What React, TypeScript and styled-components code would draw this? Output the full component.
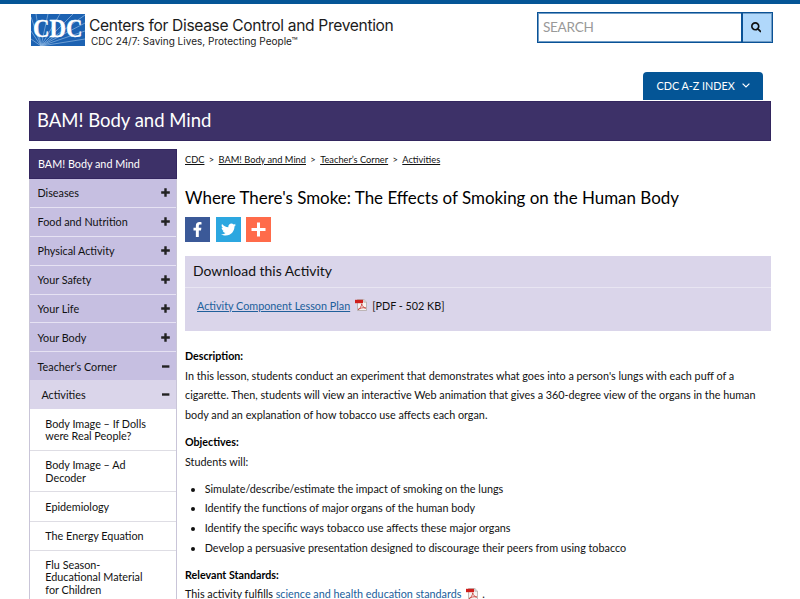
import React from 'react';
import styled, { createGlobalStyle } from 'styled-components';
import { FaFacebookF, FaSearch, FaTwitter } from 'react-icons/fa';

const GlobalStyle = createGlobalStyle`
  * { box-sizing: border-box; }
  html, body { margin: 0; padding: 0; background: #fff; }
  body {
    height: 599px;
    overflow: hidden;
    font-family: Lato, sans-serif;
    font-size: 10.8px;
    color: #111;
  }
`;

const Page = styled.div`
  width: 800px;
  height: 599px;
  overflow: hidden;
  border-top: 4px solid #045596;
`;

const Header = styled.header`
  display: flex;
  justify-content: space-between;
  height: 68px;
  padding: 8px 27px 0 31px;
`;

const Brand = styled.a`
  display: flex;
  gap: 4px;
  padding-top: 2px;
`;

const BrandText = styled.div`
  display: flex;
  flex-direction: column;
  font-family: Inter, sans-serif;
  color: #1c1c1c;
  white-space: nowrap;
`;

const BrandName = styled.span`
  margin-top: 2px;
  font-size: 15.6px;
  line-height: 20px;
  letter-spacing: -0.34px;
`;

const BrandTag = styled.span`
  margin: -1px 0 0 2px;
  font-size: 10px;
  line-height: 13px;
  letter-spacing: 0.01px;
`;

const SearchBox = styled.form`
  display: flex;
  width: 236px;
  height: 31px;
  border: 1px solid #0a5296;
  box-shadow: inset 0 0 0 1px #6f9cc6;
`;

const SearchLabel = styled.div`
  flex: 1;
  padding-left: 5px;
  font-size: 13.6px;
  letter-spacing: -0.3px;
  line-height: 28px;
  color: #999;
`;

const SearchButton = styled.div`
  display: flex;
  align-items: center;
  justify-content: center;
  width: 31px;
  padding-right: 3px;
  border: 1px solid #0a5296;
  border-width: 0 0 0 2px;
  background: #b0d8fb;
  box-shadow: inset -1px 0 0 #6f9cc6, inset 0 1px 0 #6f9cc6, inset 0 -1px 0 #6f9cc6;
  color: #111;
`;

const IndexRow = styled.div`
  display: flex;
  justify-content: flex-end;
  height: 29px;
  padding-right: 37px;
`;

const IndexTab = styled.a`
  display: flex;
  align-items: center;
  gap: 7px;
  width: 120px;
  height: 28px;
  padding: 0 0 1px 13.5px;
  border-radius: 4px 4px 0 0;
  background: #045596;
  color: #fff;
  white-space: nowrap;
`;

const Banner = styled.div`
  height: 40px;
  margin: 0 29px;
  padding-left: 7px;
  border: 1px solid #33265f;
  background: #3d3168;
  color: #fff;
  font-size: 18.5px;
  line-height: 37px;
`;

const Columns = styled.div`
  display: grid;
  grid-template-columns: 148px 586px;
  column-gap: 8px;
  padding: 8px 29px 0;
`;

const Nav = styled.nav`
  display: flex;
  flex-direction: column;
`;

const NavHeading = styled.div`
  height: 30px;
  padding-left: 8px;
  border: 1px solid #33265f;
  background: #3d3168;
  color: #fff;
  line-height: 28px;
`;

const NavList = styled.div`
  border: solid #c9c5d8;
  border-width: 0 1px;
`;

const NavItem = styled.div<{ $sub?: boolean; $last?: boolean }>`
  display: flex;
  align-items: center;
  justify-content: space-between;
  height: ${(p) => (p.$last ? 27.6 : p.$sub ? 29.2 : 28.9)}px;
  padding: 0 6px 0 ${(p) => (p.$sub ? 11.4 : 7.5)}px;
  border-bottom: ${(p) => (p.$last || p.$sub ? 'none' : '1px solid #e6e2f3')};
  background: ${(p) => (p.$sub ? '#dad5ea' : '#c6bfe1')};
`;

const NavLeaf = styled.div`
  padding: 8.4px 30px 7.4px 15.3px;
  border-bottom: 1px solid #dedde4;
  line-height: 12.4px;
`;

const Main = styled.main`
  min-width: 0;
`;

const Crumbs = styled.div`
  display: flex;
  gap: 4.4px;
  height: 22px;
  font-size: 9.27px;
  line-height: 22px;
`;

const Crumb = styled.a`
  text-decoration: underline;
`;

const Title = styled.h1`
  margin: 14px 0 0;
  height: 32px;
  font-size: 16.95px;
  font-weight: 400;
  line-height: 25px;
  color: #000;
`;

const Share = styled.div`
  display: flex;
  gap: 5.5px;
`;

const ShareButton = styled.a<{ $color: string }>`
  display: flex;
  align-items: center;
  justify-content: center;
  width: 25px;
  height: 25px;
  background: ${(p) => p.$color};
  color: #fff;
`;

const Download = styled.section`
  height: 75px;
  margin: 14px 0 15px;
  background: #dad5ea;
`;

const DownloadTitle = styled.h2`
  height: 32px;
  margin: 0;
  padding-left: 8px;
  border-bottom: 1px solid #e8e5f2;
  font-size: 13.95px;
  font-weight: 400;
  line-height: 30px;
`;

const DownloadRow = styled.div`
  display: flex;
  align-items: center;
  gap: 5px;
  height: 34px;
  padding-left: 12px;
`;

const Link = styled.a<{ $underline?: boolean }>`
  color: #20609b;
  text-decoration: ${(p) => (p.$underline ? 'underline' : 'none')};
`;

const Block = styled.div`
  margin-bottom: 7.7px;
  line-height: 19.6px;
`;

const Strong = styled.div`
  font-weight: 700;
  font-size: 10.7px;
  color: #000;
`;

const Bullets = styled.ul`
  margin: 0 0 7.6px;
  padding-left: 19.7px;
  line-height: 19.55px;
`;

const InlineIcon = styled.span`
  display: inline-block;
  margin: 0 1px 0 5px;
  vertical-align: -2px;
  line-height: 0;
`;

function CdcLogo() {
  return (
    <svg width="54" height="32" viewBox="0 0 54 32">
      <rect width="54" height="32" fill="#1c62b2" />
      <g stroke="#8fb7e3" strokeWidth="0.7">
        <path d="M10 32 0 3M10 32 5 0M10 32 17 0M10 32 29 0M10 32 42 0M10 32 54 1M10 32 54 9M10 32 54 17M10 32 54 25M10 32 0 17M10 32 0 25" />
      </g>
      <text
        x="2"
        y="22.6"
        fill="#fff"
        stroke="#fff"
        strokeWidth="0.3"
        fontFamily="Liberation Serif, serif"
        fontWeight="700"
        fontSize="24.6"
        textLength="49.5"
        lengthAdjust="spacingAndGlyphs"
      >
        CDC
      </text>
    </svg>
  );
}

function ToggleIcon({ open }: { open?: boolean }) {
  return (
    <svg width="9" height="9" viewBox="0 0 9 9">
      <path d={open ? 'M1 4.5h7.4' : 'M.2 4.5h8.6M4.5.2v8.6'} stroke="#222" strokeWidth="2.4" />
    </svg>
  );
}

function PdfIcon() {
  return (
    <svg width="12" height="12" viewBox="0 0 12 12">
      <path d="M2.5.5h6.3l2.7 2.7v8.3h-9z" fill="#f6f3f1" stroke="#a9a09d" strokeWidth="0.7" />
      <path d="M8.8.5v2.7h2.7" fill="#ddd" stroke="#a9a09d" strokeWidth="0.6" />
      <path d="M0 .8h8v3.4H0z" fill="#cf1f1c" />
      <path
        d="M3 10.6c2-.9 3.6-3.4 3.7-5.8.6 2.6 2 3.9 4.2 4.3C8 8.200 5.500 9 3 10.6z"
        fill="none"
        stroke="#c4332c"
        strokeWidth="0.8"
      />
    </svg>
  );
}

const topics = ['Diseases', 'Food and Nutrition', 'Physical Activity', 'Your Safety', 'Your Life', 'Your Body'];
const activities = [
  'Body Image – If Dolls were Real People?',
  'Body Image – Ad Decoder',
  'Epidemiology',
  'The Energy Equation',
  'Flu Season-Educational Material for Children',
];
const crumbs = ['CDC', 'BAM! Body and Mind', 'Teacher’s Corner', 'Activities'];
const objectives = [
  'Simulate/describe/estimate the impact of smoking on the lungs',
  'Identify the functions of major organs of the human body',
  'Identify the specific ways tobacco use affects these major organs',
  'Develop a persuasive presentation designed to discourage their peers from using tobacco',
];

export default function App() {
  return (
    <Page>
      <GlobalStyle />
      <Header>
        <Brand>
          <CdcLogo />
          <BrandText>
            <BrandName>Centers for Disease Control and Prevention</BrandName>
            <BrandTag>CDC 24/7: Saving Lives, Protecting People™</BrandTag>
          </BrandText>
        </Brand>
        <SearchBox>
          <SearchLabel>SEARCH</SearchLabel>
          <SearchButton>
            <FaSearch size={10.5} />
          </SearchButton>
        </SearchBox>
      </Header>
      <IndexRow>
        <IndexTab>
          CDC A-Z INDEX
          <svg width="8" height="5" viewBox="0 0 8 5">
            <path d="M.6.6 4 4 7.4.6" fill="none" stroke="#fff" strokeWidth="1.2" />
          </svg>
        </IndexTab>
      </IndexRow>
      <Banner>BAM! Body and Mind</Banner>
      <Columns>
        <Nav>
          <NavHeading>BAM! Body and Mind</NavHeading>
          <NavList>
            {topics.map((t) => (
              <NavItem key={t}>
                {t}
                <ToggleIcon />
              </NavItem>
            ))}
            <NavItem $last>
              Teacher’s Corner
              <ToggleIcon open />
            </NavItem>
            <NavItem $sub>
              Activities
              <ToggleIcon open />
            </NavItem>
            {activities.map((a) => (
              <NavLeaf key={a}>{a}</NavLeaf>
            ))}
          </NavList>
        </Nav>
        <Main>
          <Crumbs>
            {crumbs.map((c, i) => (
              <React.Fragment key={c}>
                {i > 0 && <span>&gt;</span>}
                <Crumb>{c}</Crumb>
              </React.Fragment>
            ))}
          </Crumbs>
          <Title>Where There's Smoke: The Effects of Smoking on the Human Body</Title>
          <Share>
            <ShareButton $color="#3b5998">
              <FaFacebookF size={15} />
            </ShareButton>
            <ShareButton $color="#2ca7e0">
              <FaTwitter size={15} />
            </ShareButton>
            <ShareButton $color="#ff6b4a">
              <svg width="15" height="15" viewBox="0 0 15 15">
                <path d="M.5 7.5h14M7.5.5v14" stroke="#fff" strokeWidth="3" />
              </svg>
            </ShareButton>
          </Share>
          <Download>
            <DownloadTitle>Download this Activity</DownloadTitle>
            <DownloadRow>
              <Link $underline>Activity Component Lesson Plan</Link>
              <PdfIcon />
              <span>[PDF - 502 KB]</span>
            </DownloadRow>
          </Download>
          <Block>
            <Strong>Description:</Strong>
            In this lesson, students conduct an experiment that demonstrates what goes into a person's lungs with each
            puff of a cigarette. Then, students will view an interactive Web animation that gives a 360-degree view of
            the organs in the human body and an explanation of how tobacco use affects each organ.
          </Block>
          <Block>
            <Strong>Objectives:</Strong>
            Students will:
          </Block>
          <Bullets>
            {objectives.map((o) => (
              <li key={o}>{o}</li>
            ))}
          </Bullets>
          <Block>
            <Strong>Relevant Standards:</Strong>
            This activity fulfills <Link>science and health education standards</Link>
            <InlineIcon>
              <PdfIcon />
            </InlineIcon>{' '}
            .
          </Block>
        </Main>
      </Columns>
    </Page>
  );
}
